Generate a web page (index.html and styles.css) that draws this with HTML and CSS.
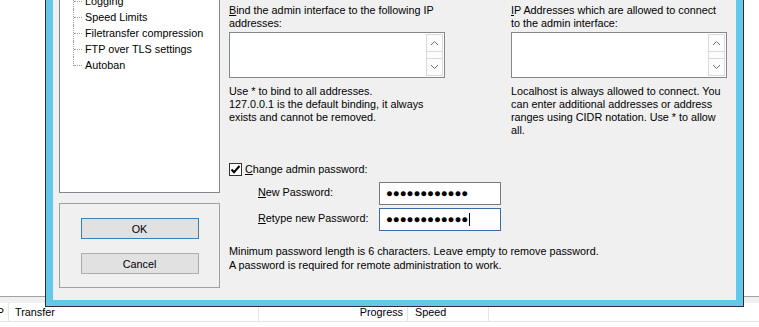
FILE: index.html
```html
<!DOCTYPE html>
<html lang="en">
<head>
    <meta charset="UTF-8">
    <meta name="viewport" content="width=device-width, initial-scale=1.0">
    <title>Admin Interface settings</title>
    <link rel="stylesheet" href="styles.css">
</head>
<body>
    <div class="app">
        <div class="app-space"></div>
        <div class="app-bar"></div>
        <div class="list-head">
            <div class="col col-dir"><span>P</span></div>
            <div class="col col-transfer">Transfer</div>
            <div class="col col-progress">Progress</div>
            <div class="col col-speed">Speed</div>
            <div class="col col-rest"></div>
        </div>
    </div>

    <div class="dialog">
        <div class="client">
            <div class="side">
                <div class="tree">
                    <ul class="branch">
                        <li>Logging</li>
                        <li>Speed Limits</li>
                        <li>Filetransfer compression</li>
                        <li>FTP over TLS settings</li>
                        <li>Autoban</li>
                    </ul>
                </div>
                <div class="buttons">
                    <button type="button" class="btn default">OK</button>
                    <button type="button" class="btn">Cancel</button>
                </div>
            </div>

            <div class="page">
                <div class="ip-row">
                    <div class="ip-col">
                        <label class="caption"><u>B</u>ind the admin interface to the following IP<br>addresses:</label>
                        <div class="listbox">
                            <div class="scroll">
                                <span class="arrow up">
                                    <svg width="9" height="6" viewBox="0 0 9 6"><polyline points="1,5 4.5,1.5 8,5" fill="none" stroke="#707070" stroke-width="1"/></svg>
                                </span>
                                <span class="track"></span>
                                <span class="arrow down">
                                    <svg width="9" height="6" viewBox="0 0 9 6"><polyline points="1,1 4.5,4.5 8,1" fill="none" stroke="#707070" stroke-width="1"/></svg>
                                </span>
                            </div>
                        </div>
                        <p class="hint">Use * to bind to all addresses.<br>127.0.0.1 is the default binding, it always<br>exists and cannot be removed.</p>
                    </div>
                    <div class="ip-col">
                        <label class="caption"><u>I</u>P Addresses which are allowed to connect<br>to the admin interface:</label>
                        <div class="listbox">
                            <div class="scroll">
                                <span class="arrow up">
                                    <svg width="9" height="6" viewBox="0 0 9 6"><polyline points="1,5 4.5,1.5 8,5" fill="none" stroke="#707070" stroke-width="1"/></svg>
                                </span>
                                <span class="track"></span>
                                <span class="arrow down">
                                    <svg width="9" height="6" viewBox="0 0 9 6"><polyline points="1,1 4.5,4.5 8,1" fill="none" stroke="#707070" stroke-width="1"/></svg>
                                </span>
                            </div>
                        </div>
                        <p class="hint">Localhost is always allowed to connect. You<br>can enter additional addresses or address<br>ranges using CIDR notation. Use * to allow<br>all.</p>
                    </div>
                </div>

                <div class="check-row">
                    <span class="checkbox">
                        <svg width="11" height="11" viewBox="0 0 11 11"><polyline points="1.5,5.5 4,8.2 9.5,2" fill="none" stroke="#000" stroke-width="2"/></svg>
                    </span>
                    <label><u>C</u>hange admin password:</label>
                </div>

                <div class="pw-row">
                    <label><u>N</u>ew Password:</label>
                    <div class="field"><span class="dots">●●●●●●●●●●●●</span></div>
                </div>
                <div class="pw-row second">
                    <label><u>R</u>etype new Password:</label>
                    <div class="field focus"><span class="dots">●●●●●●●●●●●●</span><span class="caret"></span></div>
                </div>

                <p class="note">Minimum password length is 6 characters. Leave empty to remove password.<br>A password is required for remote administration to work.</p>
            </div>
        </div>
    </div>
</body>
</html>
```

FILE: styles.css
```css
* {
    box-sizing: border-box;
}
html, body {
    margin: 0;
    padding: 0;
}
body {
    width: 759px;
    height: 327px;
    position: relative;
    overflow: hidden;
    background: #fff;
    color: #000;
    font-family: "Liberation Sans", Arial, sans-serif;
    font-size: 10.8px;
}

/* main window behind the dialog */
.app {
    display: flex;
    flex-direction: column;
    height: 327px;
}
.app-space {
    height: 296px;
}
.app-bar {
    height: 7px;
    background: #f0f0f0;
    border-top: 1px solid #a0a0a0;
}
.list-head {
    display: flex;
    height: 19px;
    background: #fff;
    border-bottom: 1px solid #e5e5e5;
}
.col {
    line-height: 18px;
    border-right: 1px solid #e5e5e5;
    white-space: nowrap;
    overflow: hidden;
}
.col-dir {
    width: 9px;
    display: flex;
    justify-content: flex-end;
    padding-right: 4px;
}
.col-dir span {
    flex: none;
}
.col-transfer {
    width: 250px;
    padding-left: 6px;
}
.col-progress {
    width: 149px;
    text-align: right;
    padding-right: 4px;
}
.col-speed {
    width: 81px;
    padding-left: 7px;
}
.col-rest {
    flex: 1;
    border-right: none;
}

/* dialog */
.dialog {
    position: absolute;
    left: 45px;
    top: -8px;
    width: 699px;
    height: 315px;
    border: 1px solid #2f2f2f;
    background: #64c8ea;
    padding: 7px 7px 6px 7px;
}
.client {
    height: 100%;
    background: #f0f0f0;
    display: flex;
    padding-left: 6px;
}
.side {
    width: 161px;
    margin-right: 9px;
    display: flex;
    flex-direction: column;
}
.tree {
    margin-top: -20px;
    height: 213px;
    border: 1px solid #828790;
    background: #fff;
}
.branch {
    list-style: none;
    margin: 0;
    padding: 12px 0 0 0;
}
.branch li {
    position: relative;
    height: 16px;
    line-height: 16px;
    padding-left: 25px;
    white-space: nowrap;
}
.branch li::before {
    content: "";
    position: absolute;
    left: 14px;
    top: 8px;
    width: 8px;
    border-top: 1px dotted #a0a0a0;
}
.branch li::after {
    content: "";
    position: absolute;
    left: 13px;
    top: 0;
    height: 16px;
    border-left: 1px dotted #a0a0a0;
}
.branch li:last-child::after {
    height: 9px;
}
.buttons {
    margin-top: 10px;
    height: 85px;
    border: 1px solid #a0a0a0;
    display: flex;
    flex-direction: column;
    align-items: center;
    padding-top: 14px;
    gap: 14px;
}
.btn {
    width: 118px;
    height: 21px;
    padding: 0;
    border: 1px solid #adadad;
    background: #e1e1e1;
    font: inherit;
    color: #000;
}
.btn.default {
    border-color: #3c7fb1;
}

/* settings page */
.page {
    width: 498px;
    padding-top: 4px;
    display: flex;
    flex-direction: column;
}
.ip-row {
    display: flex;
    gap: 66px;
}
.ip-col {
    width: 216px;
}
.caption {
    display: block;
    line-height: 13.3px;
    margin-bottom: 1px;
    white-space: nowrap;
}
.listbox {
    height: 46px;
    border: 1px solid #828790;
    background: #fff;
    display: flex;
    justify-content: flex-end;
    padding: 1px;
}
.scroll {
    width: 17px;
    display: flex;
    flex-direction: column;
    border: 1px solid #dadada;
    background: #fcfcfc;
}
.arrow {
    height: 17px;
    display: flex;
    align-items: center;
    justify-content: center;
}
.arrow.up {
    border-bottom: 1px solid #dadada;
}
.arrow.down {
    border-top: 1px solid #dadada;
}
.track {
    flex: 1;
}
.hint {
    margin: 7px 0 0;
    line-height: 13.3px;
    white-space: nowrap;
}
.check-row {
    margin-top: 25px;
    height: 13px;
    display: flex;
    align-items: center;
    gap: 3px;
    line-height: 13px;
}
.checkbox {
    width: 13px;
    height: 13px;
    border: 1px solid #333;
    background: #fff;
    display: flex;
}
.pw-row {
    margin-top: 6px;
    height: 23px;
    display: flex;
    align-items: center;
    padding-left: 29px;
}
.pw-row.second {
    margin-top: 3px;
}
.pw-row label {
    width: 121px;
    line-height: 13px;
    padding-bottom: 2px;
}
.field {
    width: 122px;
    height: 23px;
    border: 1px solid #7a7a7a;
    background: #fff;
    display: flex;
    align-items: center;
    padding-left: 6px;
}
.field.focus {
    border-color: #3c6ea5;
}
.dots {
    font-size: 11.5px;
    letter-spacing: -0.1px;
    line-height: 13px;
}
.caret {
    width: 1px;
    height: 13px;
    background: #000;
    margin-left: 1px;
}
.note {
    margin: 13px 0 0;
    line-height: 14px;
    white-space: nowrap;
}
```
